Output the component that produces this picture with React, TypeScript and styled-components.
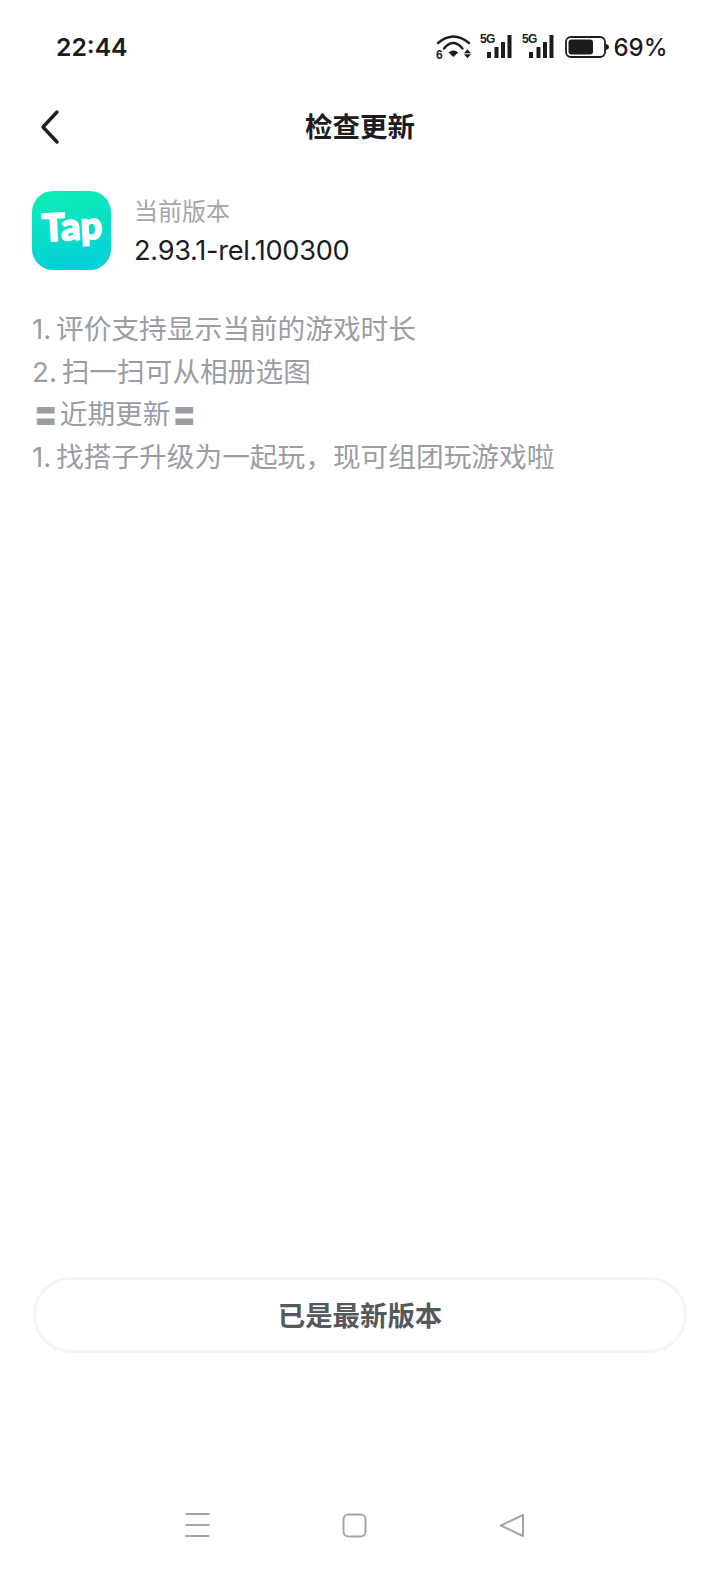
import React from "react";
import styled, { createGlobalStyle } from "styled-components";

const Global = createGlobalStyle`
  html, body { margin: 0; padding: 0; background: #fff; }
  body { font-family: Inter, "Noto Sans CJK SC", sans-serif; }
`;

const Page = styled.div`
  width: 720px;
  height: 1569px;
  display: flex;
  flex-direction: column;
  background: #fff;
  overflow: hidden;
`;

const StatusBar = styled.div`
  height: 94px;
  box-sizing: border-box;
  padding: 30px 52.5px 0 56px;
  display: flex;
  justify-content: space-between;
  align-items: flex-start;
`;

const Time = styled.span`
  font-size: 24.7px;
  line-height: 34px;
  font-weight: 600;
  color: #1c1c1e;
`;

const StatusIcons = styled.div`
  display: flex;
  align-items: center;
  height: 34px;
`;

const SignalWrap = styled.div`
  position: relative;
  width: 34px;
  height: 30px;
  margin-left: 8px;
`;

const SmallLabel = styled.span<{ $left: number; $top: number }>`
  position: absolute;
  left: ${(p) => p.$left}px;
  top: ${(p) => p.$top}px;
  font-family: "Liberation Sans", sans-serif;
  font-size: 12px;
  line-height: 12px;
  font-weight: 700;
  color: #1c1c1e;
  letter-spacing: -0.5px;
`;

const WifiWrap = styled.div`
  position: relative;
  width: 36px;
  height: 30px;
`;

const Percent = styled.span`
  font-size: 24px;
  line-height: 34px;
  font-weight: 500;
  color: #1c1c1e;
  margin-left: 4px;
  padding-top: 1px;
`;

const BatteryIcon = styled.svg`
  margin-left: 10.5px;
  display: block;
`;

const NavBar = styled.div`
  height: 66px;
  position: relative;
  display: flex;
  align-items: center;
  justify-content: center;
`;

const BackButton = styled.svg`
  position: absolute;
  left: 39px;
  top: 15px;
`;

const Title = styled.h1`
  margin: 0;
  font-size: 27.5px;
  font-weight: 700;
  line-height: 36px;
  color: #1d1d1f;
`;

const Content = styled.main`
  flex: 1;
  padding: 31px 32px 0;
  display: flex;
  flex-direction: column;
`;

const VersionRow = styled.div`
  display: flex;
  align-items: center;
  gap: 23px;
`;

const AppIcon = styled.div`
  width: 79px;
  height: 79px;
  border-radius: 21px;
  background: linear-gradient(170deg, #12edb5 0%, #00cedb 100%);
  display: flex;
  align-items: center;
  justify-content: center;
  padding-bottom: 11px;
  box-sizing: border-box;
`;

const AppIconLabel = styled.span`
  font-family: Lato, sans-serif;
  font-size: 38px;
  line-height: 40px;
  font-weight: 900;
  color: #fff;
  transform: rotate(-3deg);
  letter-spacing: 0;
  -webkit-text-stroke: 1.6px #fff;
`;

const VersionText = styled.div`
  display: flex;
  flex-direction: column;
  gap: 5px;
  padding-top: 4px;
`;

const VersionLabel = styled.span`
  font-size: 24px;
  line-height: 32px;
  color: #a3a6ab;
`;

const VersionValue = styled.span`
  font-size: 27.2px;
  line-height: 36px;
  color: #1d1d1f;
  letter-spacing: -0.3px;
`;

const Notes = styled.div`
  margin-top: 38px;
  display: flex;
  flex-direction: column;
`;

const NoteLine = styled.div`
  height: 42.5px;
  font-size: 27.7px;
  line-height: 42.5px;
  color: #9a9da3;
  word-spacing: -3px;
`;

const Geta = styled.span`
  display: inline-block;
  width: 27.7px;
  font-size: 22px;
  line-height: 1;
  text-align: center;
`;

const Footer = styled.div`
  padding: 0 33px;
  margin-bottom: 139px;
`;

const UpdateButton = styled.button`
  width: 100%;
  height: 76px;
  box-sizing: border-box;
  border-radius: 38px;
  border: 3px solid #f4f4f5;
  background: #fff;
  font-family: inherit;
  font-size: 27.4px;
  font-weight: 700;
  color: #55585d;
  padding: 0 0 3px;
`;

const SystemNav = styled.div`
  height: 77px;
  box-sizing: border-box;
  padding: 21px 0 0 185px;
  display: flex;
  align-items: flex-start;
  gap: 132px;
`;

const Bars = () => (
  <g fill="#1c1c1e">
    <rect x="8" y="20" width="4" height="6" />
    <rect x="15.5" y="15" width="4" height="11" />
    <rect x="22" y="10" width="4" height="16" />
    <rect x="28.5" y="3" width="4" height="23" />
  </g>
);

const Signal = () => (
  <SignalWrap>
    <svg width="34" height="30" viewBox="0 0 34 30">
      <Bars />
    </svg>
    <SmallLabel $left={1} $top={1}>5G</SmallLabel>
  </SignalWrap>
);

export default function App() {
  return (
    <Page>
      <Global />
      <StatusBar>
        <Time>22:44</Time>
        <StatusIcons>
          <WifiWrap>
            <svg width="36" height="30" viewBox="0 0 36 30" fill="none">
              <path d="M3 11Q18.5 -2 34 11" stroke="#1c1c1e" strokeWidth="2.4" strokeLinecap="round" />
              <path d="M9 16.5Q18.2 5.5 27.5 16.5" stroke="#1c1c1e" strokeWidth="2.4" strokeLinecap="round" />
              <path d="M13.5 20.5Q18.3 16.5 23.3 20.5L18.3 25Z" fill="#1c1c1e" strokeLinejoin="round" />
              <path d="M29 21.3L32.5 17.3L36 21.3ZM29 22.3L32.5 26.3L36 22.3Z" fill="#1c1c1e" />
            </svg>
            <SmallLabel $left={1} $top={17}>6</SmallLabel>
          </WifiWrap>
          <Signal />
          <Signal />
          <BatteryIcon width="44" height="22" viewBox="0 0 44 22" fill="none">
            <rect x="1" y="1" width="39" height="20" rx="5" stroke="#1c1c1e" strokeWidth="1.8" />
            <rect x="3.5" y="3.5" width="24.5" height="15" rx="3" fill="#1c1c1e" />
            <path d="M41 8C43 8.5 44 9.5 44 11C44 12.5 43 13.5 41 14Z" fill="#1c1c1e" />
          </BatteryIcon>
          <Percent>69%</Percent>
        </StatusIcons>
      </StatusBar>

      <NavBar>
        <BackButton width="26" height="36" viewBox="0 0 26 36" fill="none">
          <path d="M18 3L4 18L18 33" stroke="#1d1d1f" strokeWidth="3.4" strokeLinecap="round" strokeLinejoin="round" />
        </BackButton>
        <Title>检查更新</Title>
      </NavBar>

      <Content>
        <VersionRow>
          <AppIcon>
            <AppIconLabel>Tap</AppIconLabel>
          </AppIcon>
          <VersionText>
            <VersionLabel>当前版本</VersionLabel>
            <VersionValue>2.93.1-rel.100300</VersionValue>
          </VersionText>
        </VersionRow>
        <Notes>
          <NoteLine>1. 评价支持显示当前的游戏时长</NoteLine>
          <NoteLine>2. 扫一扫可从相册选图</NoteLine>
          <NoteLine><Geta>〓</Geta>近期更新<Geta>〓</Geta></NoteLine>
          <NoteLine>1. 找搭子升级为一起玩，现可组团玩游戏啦</NoteLine>
        </Notes>
      </Content>

      <Footer>
        <UpdateButton>已是最新版本</UpdateButton>
      </Footer>

      <SystemNav>
        <svg width="25" height="24" viewBox="0 0 25 24" fill="none">
          <path d="M0.5 1H24.5M0.5 12H24.5M0.5 23H24.5" stroke="#a4a4a6" strokeWidth="2" />
        </svg>
        <svg width="25" height="25" viewBox="0 0 25 25" fill="none">
          <rect x="1.5" y="1.5" width="22" height="22" rx="5" stroke="#a4a4a6" strokeWidth="2" />
        </svg>
        <svg width="26" height="25" viewBox="0 0 26 25" fill="none">
          <path d="M24 2V23L2 12.5Z" stroke="#a4a4a6" strokeWidth="2" strokeLinejoin="round" />
        </svg>
      </SystemNav>
    </Page>
  );
}
